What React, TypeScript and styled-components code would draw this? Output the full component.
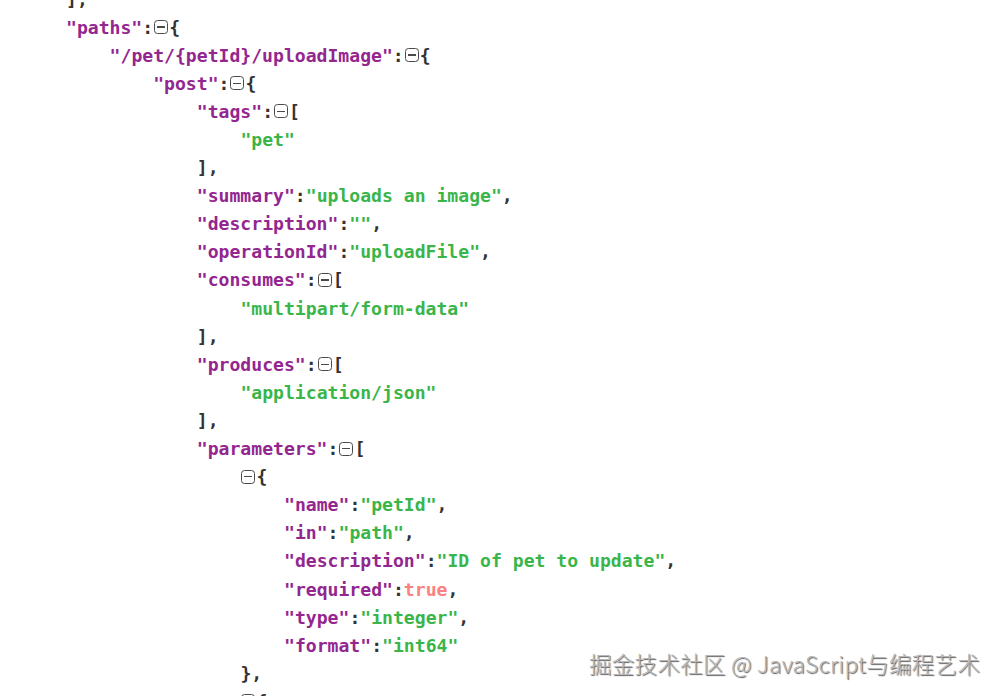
import React from "react";
import styled, { createGlobalStyle } from "styled-components";

const Global = createGlobalStyle`
  html, body { margin: 0; padding: 0; background: #ffffff; }
  body { width: 1000px; height: 696px; overflow: hidden; }
`;

const Page = styled.div`
  position: relative;
  width: 1000px;
  height: 696px;
  overflow: hidden;
  background: #ffffff;
`;

const Viewer = styled.div`
  display: flex;
  flex-direction: column;
  margin-top: -15px;
  padding-left: 66px;
  font-family: "DejaVu Sans Mono", "Liberation Mono", monospace;
  font-weight: bold;
  font-size: 18.1px;
  color: #333333;
`;

const Line = styled.div<{ $level: number }>`
  display: flex;
  align-items: center;
  height: 28.1px;
  padding-left: ${(p) => p.$level * 43.6}px;
  white-space: pre;
`;

const Key = styled.span`
  color: #93268f;
`;

const Str = styled.span`
  color: #3ab54a;
`;

const Bool = styled.span`
  color: #f98280;
`;

const Punct = styled.span`
  color: #333333;
`;

const Toggle = styled.span`
  display: inline-flex;
  align-items: center;
  justify-content: center;
  box-sizing: border-box;
  width: 14px;
  height: 14px;
  border: 1.5px solid #4a4a4a;
  border-radius: 3.5px;
  margin: 0 1px 0 1px;
  &::after {
    content: "";
    display: block;
    width: 8px;
    height: 1.5px;
    background: #4a4a4a;
  }
`;

const Watermark = styled.div`
  position: absolute;
  left: 589px;
  top: 647px;
  font-family: "Noto Sans CJK SC", "Noto Sans", sans-serif;
  font-size: 22.5px;
  font-weight: 300;
  letter-spacing: 0.3px;
  color: #b8b8b8;
  text-shadow: 1px 1px 1px #5a5a5a;
  white-space: nowrap;
`;

type Tok =
  | { t: "k"; v: string }
  | { t: "s"; v: string }
  | { t: "b"; v: string }
  | { t: "p"; v: string }
  | { t: "x" };

const k = (v: string): Tok => ({ t: "k", v: `"${v}"` });
const s = (v: string): Tok => ({ t: "s", v: `"${v}"` });
const p = (v: string): Tok => ({ t: "p", v });
const x: Tok = { t: "x" };

const lines: { lv: number; toks: Tok[] }[] = [
  { lv: 0, toks: [p("],")] },
  { lv: 0, toks: [k("paths"), p(":"), x, p("{")] },
  { lv: 1, toks: [k("/pet/{petId}/uploadImage"), p(":"), x, p("{")] },
  { lv: 2, toks: [k("post"), p(":"), x, p("{")] },
  { lv: 3, toks: [k("tags"), p(":"), x, p("[")] },
  { lv: 4, toks: [s("pet")] },
  { lv: 3, toks: [p("],")] },
  { lv: 3, toks: [k("summary"), p(":"), s("uploads an image"), p(",")] },
  { lv: 3, toks: [k("description"), p(":"), s(""), p(",")] },
  { lv: 3, toks: [k("operationId"), p(":"), s("uploadFile"), p(",")] },
  { lv: 3, toks: [k("consumes"), p(":"), x, p("[")] },
  { lv: 4, toks: [s("multipart/form-data")] },
  { lv: 3, toks: [p("],")] },
  { lv: 3, toks: [k("produces"), p(":"), x, p("[")] },
  { lv: 4, toks: [s("application/json")] },
  { lv: 3, toks: [p("],")] },
  { lv: 3, toks: [k("parameters"), p(":"), x, p("[")] },
  { lv: 4, toks: [x, p("{")] },
  { lv: 5, toks: [k("name"), p(":"), s("petId"), p(",")] },
  { lv: 5, toks: [k("in"), p(":"), s("path"), p(",")] },
  { lv: 5, toks: [k("description"), p(":"), s("ID of pet to update"), p(",")] },
  { lv: 5, toks: [k("required"), p(":"), { t: "b", v: "true" }, p(",")] },
  { lv: 5, toks: [k("type"), p(":"), s("integer"), p(",")] },
  { lv: 5, toks: [k("format"), p(":"), s("int64")] },
  { lv: 4, toks: [p("},")] },
  { lv: 4, toks: [x, p("{")] },
];

const renderTok = (tok: Tok, i: number) => {
  switch (tok.t) {
    case "k":
      return <Key key={i}>{tok.v}</Key>;
    case "s":
      return <Str key={i}>{tok.v}</Str>;
    case "b":
      return <Bool key={i}>{tok.v}</Bool>;
    case "p":
      return <Punct key={i}>{tok.v}</Punct>;
    default:
      return <Toggle key={i} />;
  }
};

export default function App() {
  return (
    <Page>
      <Global />
      <Viewer>
        {lines.map((l, i) => (
          <Line key={i} $level={l.lv}>
            {l.toks.map(renderTok)}
          </Line>
        ))}
      </Viewer>
      <Watermark>掘金技术社区 @ JavaScript与编程艺术</Watermark>
    </Page>
  );
}
